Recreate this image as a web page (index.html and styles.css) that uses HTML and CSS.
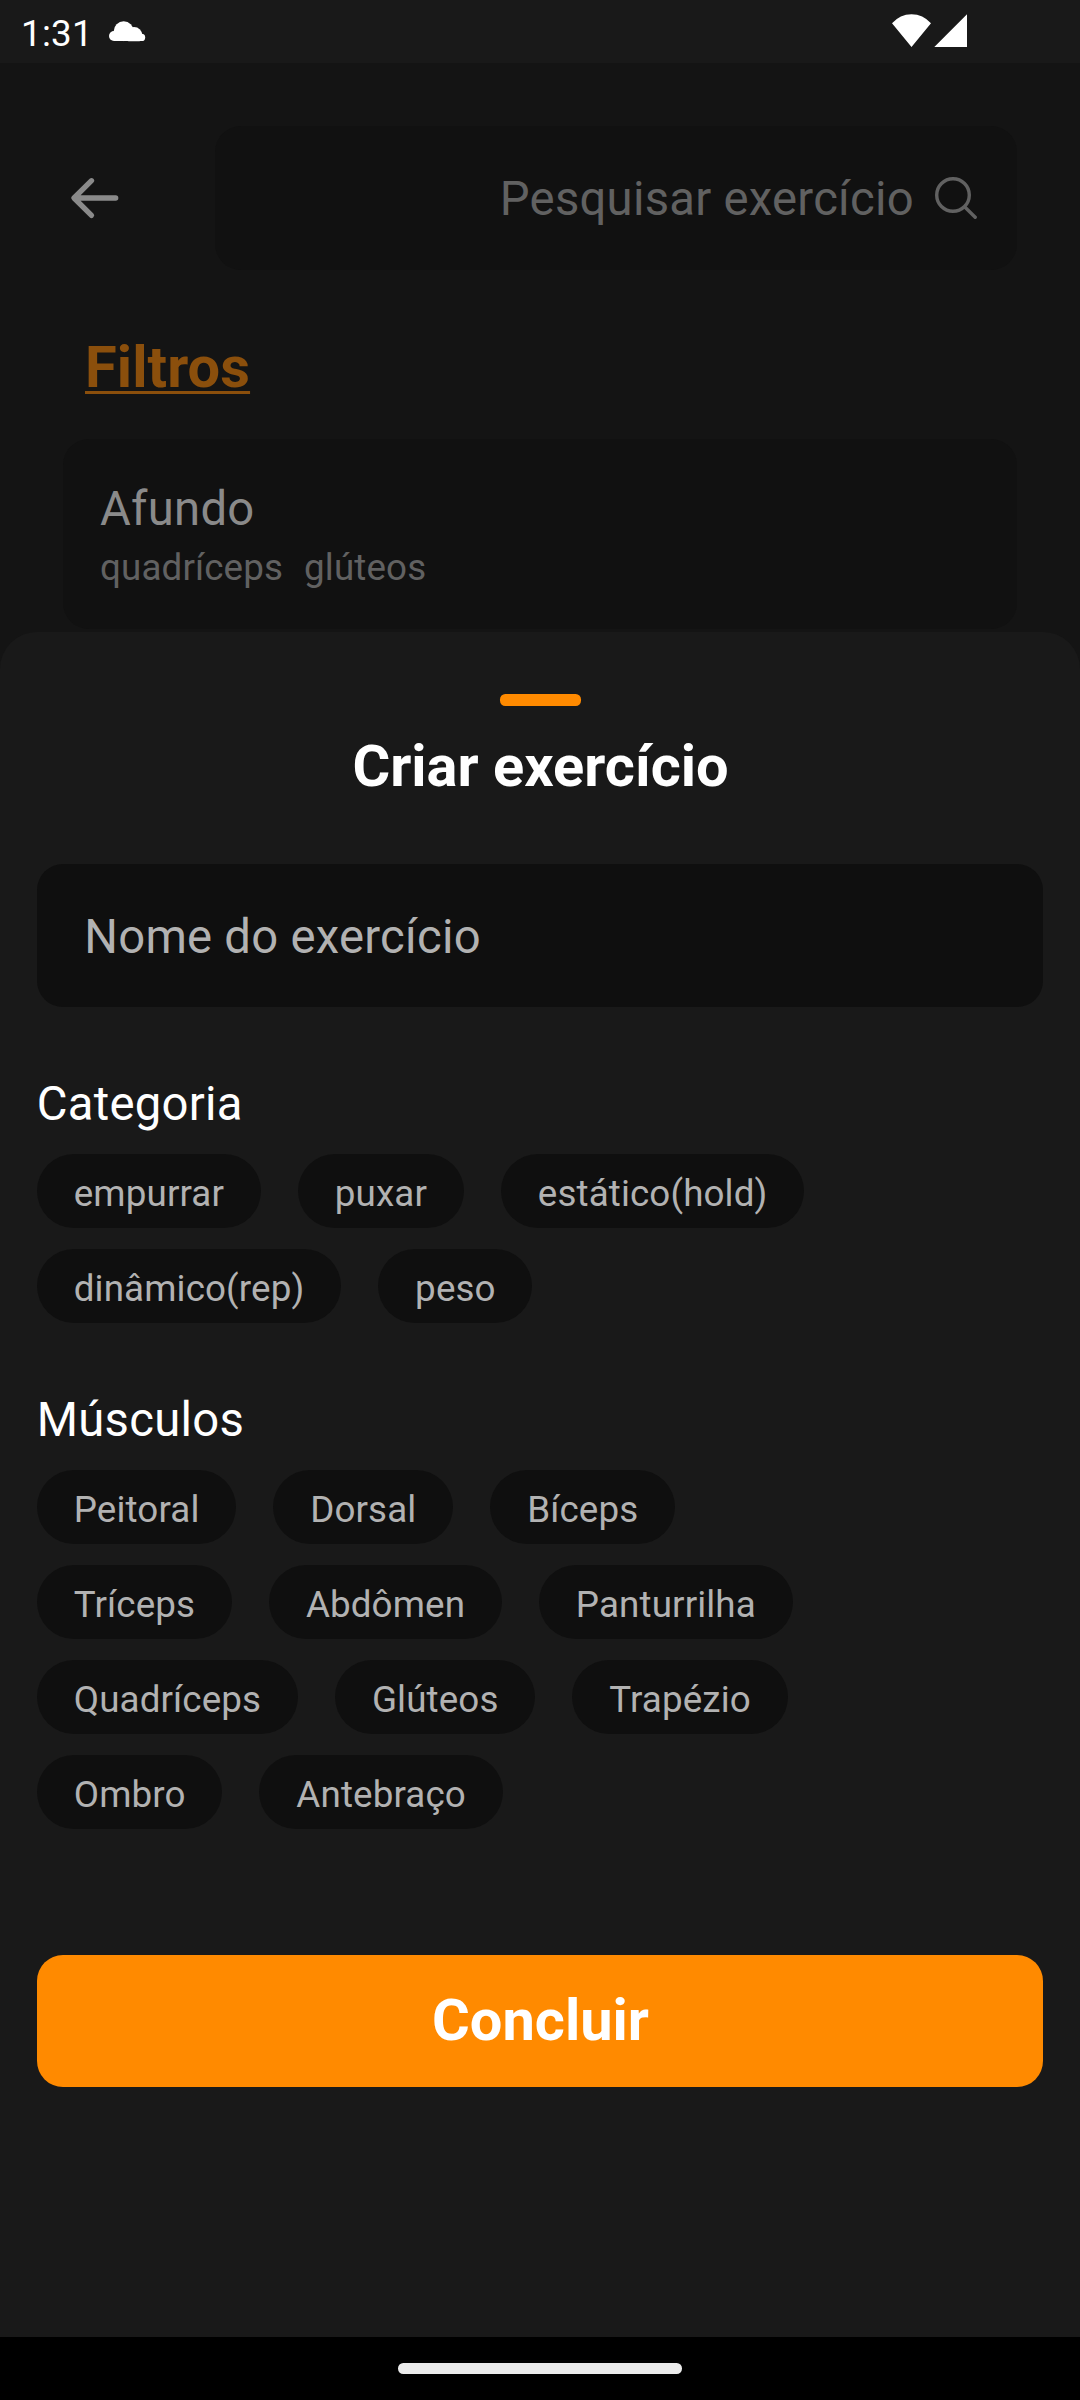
FILE: index.html
```html
<!DOCTYPE html>
<html lang="pt-BR">
<head>
<meta charset="utf-8">
<title>Criar exercício</title>
<link rel="stylesheet" href="styles.css">
</head>
<body>
<div class="screen">
  <header class="status">
    <span class="clock">1:31</span>
    <svg class="cloud" width="37" height="21" viewBox="0 0 37 21" fill="#fff"><circle cx="5" cy="15" r="5"/><circle cx="14.700" cy="10.200" r="10"/><circle cx="25" cy="14.500" r="8.400"/><circle cx="32.600" cy="16.400" r="3.600"/><path d="M5 12H32.600V20H5Z"/><path fill="#191919" d="M0 20.200H37V24H0Z"/></svg>
    <svg class="signal" width="76" height="34" viewBox="0 0 76 34"><path fill="#fff" d="M0 9.300Q8 0.200 19.500 0.200T39 9.300L19.500 33Z M42.300 33L75 0.300V33Z"/></svg>
  </header>
  <main class="page">
    <div class="topbar">
      <svg class="back" width="50" height="44" viewBox="0 0 50 44" fill="none" stroke="#8a8a8a" stroke-width="5.300" stroke-linecap="round" stroke-linejoin="round"><path d="M21.500 4.700L4 22L21.500 39.400M5 22H45.700"/></svg>
      <div class="search">
        <span>Pesquisar exercício</span>
        <svg width="42" height="42" viewBox="0 0 42 42" fill="none" stroke="#616161" stroke-width="3.400" stroke-linecap="round"><circle cx="18" cy="18" r="16.300"/><path d="M29.800 30L40.200 40.200"/></svg>
      </div>
    </div>
    <a class="filters">Filtros</a>
    <article class="exercise">
      <h2>Afundo</h2>
      <p><span>quadríceps</span><span>glúteos</span></p>
    </article>
  </main>
  <section class="sheet">
    <div class="handle"></div>
    <h1>Criar exercício</h1>
    <div class="field">Nome do exercício</div>
    <h3>Categoria</h3>
    <div class="chips">
      <span>empurrar</span><span>puxar</span><span>estático(hold)</span>
      <span>dinâmico(rep)</span><span>peso</span>
    </div>
    <h3>Músculos</h3>
    <div class="chips">
      <span>Peitoral</span><span>Dorsal</span><span>Bíceps</span>
      <span>Tríceps</span><span>Abdômen</span><span>Panturrilha</span>
      <span>Quadríceps</span><span>Glúteos</span><span>Trapézio</span>
      <span>Ombro</span><span>Antebraço</span>
    </div>
    <button class="submit">Concluir</button>
  </section>
  <footer class="nav"><div class="pill"></div></footer>
</div>
</body>
</html>
```
FILE: styles.css
```css
* { box-sizing: border-box; }
body { margin: 0; background: #141414; font-family: Roboto, sans-serif; letter-spacing: 0.25px; }
h1, h2, h3, p { margin: 0; font-weight: 400; }
svg { display: block; flex: none; }
.screen { width: 1080px; height: 2400px; display: flex; flex-direction: column; overflow: hidden; }

.status { height: 63px; flex: none; display: flex; align-items: flex-start; background: #191919; color: #fff; padding-right: 112px; }
.clock { width: 109px; padding: 12px 0 0 21px; font-size: 36.75px; line-height: 44px; flex: none; }
.cloud { margin-top: 20.5px; }
.signal { margin: 14px 0 0 auto; }

.page { height: 568.5px; flex: none; padding: 63px 63px 0; color: #8a8a8a; }
.topbar { display: flex; align-items: center; height: 143.7px; }
.back { margin: 1px 0 0 7px; }
.search { margin-left: 95px; width: 802px; height: 100%; display: flex; align-items: center; justify-content: flex-end; gap: 21px; padding-right: 40px; border-radius: 26px; background: #111; color: #616161; font-size: 47.25px; line-height: 56px; }
.search span { padding-top: 2px; }
.filters { display: block; width: max-content; margin: 62.3px 0 0 22px; height: 72px; font-size: 57.75px; line-height: 70px; font-weight: 700; letter-spacing: 0.1px; color: #8b4f0c; text-decoration: underline; text-decoration-thickness: 3px; text-underline-offset: 4px; text-decoration-skip-ink: none; }
.exercise { margin-top: 35px; height: 190px; border-radius: 26px; background: #111; padding: 42px 37px; }
.exercise h2 { font-size: 47.25px; line-height: 56px; }
.exercise p { display: flex; gap: 21px; color: #616161; font-size: 36.75px; line-height: 44px; letter-spacing: 0.13px; margin-top: 9px; }

.sheet { height: 1705.5px; flex: none; display: flex; flex-direction: column; background: #191919; border-radius: 37px 37px 0 0; padding: 62.5px 36.75px 0; color: #fff; }
.handle { width: 81px; height: 12px; border-radius: 5.25px; background: #ff8a00; align-self: center; }
h1 { margin-top: 25px; font-size: 57.75px; line-height: 70px; font-weight: 700; letter-spacing: 0; text-align: center; padding-left: 1px; }
.field { height: 143.7px; margin-top: 62.5px; border-radius: 26px; background: #0f0f0f; color: #b2b2b2; font-size: 47.25px; line-height: 146px; padding-left: 47.5px; }
h3 { font-size: 47.25px; line-height: 56px; margin-top: 69px; }
.chips { display: flex; flex-wrap: wrap; gap: 21.3px 37px; margin-top: 22.3px; width: 830px; }
.chips span { height: 73.7px; border-radius: 37px; padding: 0 36.75px 0 37px; background: #0f0f0f; color: #b2b2b2; font-size: 36.75px; line-height: 80.4px; letter-spacing: 0.13px; }
.submit { height: 131.5px; margin-top: 126px; border: 0; border-radius: 26px; padding: 0 0 0 1px; background: #ff8a00; color: #fff; font: 700 57.75px/131px Roboto, sans-serif; }

.nav { height: 63px; flex: none; display: flex; justify-content: center; padding-top: 26px; background: #000; }
.pill { width: 284px; height: 10.5px; border-radius: 5.25px; background: #ebebeb; }
```
